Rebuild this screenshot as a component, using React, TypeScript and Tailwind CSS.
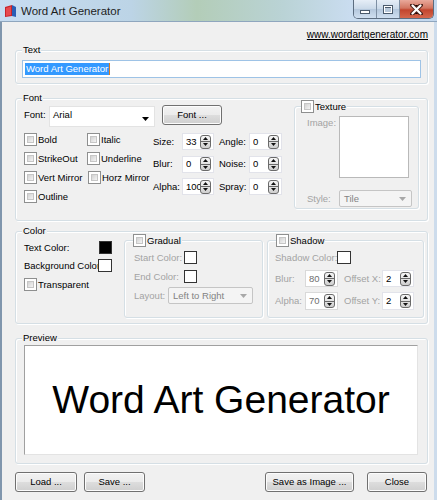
import React from 'react'

function Arrow({ color = '#000' }: { color?: string }) {
  return (
    <svg width="7" height="4" viewBox="0 0 7 4">
      <path d="M0 0H7L3.5 4Z" fill={color} />
    </svg>
  )
}

function CheckBox() {
  return (
    <div className="w-[13px] h-[13px] shrink-0 border border-[#8e8f8f] bg-white p-[2px]">
      <div className="w-full h-full bg-[linear-gradient(135deg,#d2d2d2,#f4f4f4)] border border-[#c6c6c6]" />
    </div>
  )
}

function Check({ label, className = '' }: { label: string; className?: string }) {
  return (
    <div className={`flex items-center gap-[1px] ${className}`}>
      <CheckBox />
      <span className="leading-[12px]">{label}</span>
    </div>
  )
}

function SpinBtn() {
  return (
    <div className="flex flex-col w-[11px] h-[14px] shrink-0 rounded-[3px] border border-[#6a6a6a] bg-[linear-gradient(#f6f6f6,#cfcfcf)] overflow-hidden">
      <div className="flex-1 flex items-center justify-center border-b border-[#6a6a6a]">
        <svg width="5" height="3" viewBox="0 0 5 3">
          <path d="M0 3L2.5 0L5 3Z" fill="#111" />
        </svg>
      </div>
      <div className="flex-1 flex items-center justify-center">
        <svg width="5" height="3" viewBox="0 0 5 3">
          <path d="M0 0H5L2.5 3Z" fill="#111" />
        </svg>
      </div>
    </div>
  )
}

function Spin({ value, className = '', dim = false }: { value: string; className?: string; dim?: boolean }) {
  return (
    <div
      className={`flex items-center h-[17px] bg-white border ${dim ? 'border-[#d9d9d9]' : 'border-[#e2e3ea]'} pl-[3px] pr-[2px] overflow-hidden ${className}`}
    >
      <span className={`flex-1 overflow-hidden whitespace-nowrap leading-[12px] ${dim ? 'text-[#6d6d6d]' : ''}`}>{value}</span>
      <SpinBtn />
    </div>
  )
}

function Swatch({ black = false, className = '' }: { black?: boolean; className?: string }) {
  return (
    <div
      className={`h-[13px] shrink-0 border border-[#333] ${black ? 'bg-black' : 'bg-white'} ${className}`}
    />
  )
}

function Group({
  label,
  legend,
  className = '',
  children,
}: {
  label?: string
  legend?: React.ReactNode
  className?: string
  children?: React.ReactNode
}) {
  return (
    <div
      className={`relative rounded-[3px] border border-[#d5dfe5] shadow-[inset_1px_1px_0_#fff,1px_1px_0_#fff] ${className}`}
    >
      {label && (
        <span className="absolute -top-[7px] left-[6px] bg-[#f0f0f0] px-[1px] leading-[12px]">{label}</span>
      )}
      {legend}
      {children}
    </div>
  )
}

function Button({ label, className = '' }: { label: string; className?: string }) {
  return (
    <button
      className={`h-[20px] rounded-[3px] border border-[#707070] bg-[linear-gradient(#f2f2f2_0%,#ebebeb_50%,#dddddd_51%,#cfcfcf_100%)] shadow-[inset_0_0_0_1px_#fcfcfc] text-[9.5px] leading-[12px] ${className}`}
    >
      {label}
    </button>
  )
}

function DisabledCombo({ value, className = '' }: { value: string; className?: string }) {
  return (
    <div
      className={`flex items-center justify-between h-[17px] rounded-[2px] border border-[#c5c5c5] bg-[#f4f4f4] pl-[4px] pr-[5px] ${className}`}
    >
      <span className="text-[#838383] leading-[12px]">{value}</span>
      <Arrow color="#a8a8a8" />
    </div>
  )
}

export default function App() {
  return (
    <div className="w-[437px] h-[500px] overflow-hidden flex flex-col bg-[#f0f0f0] text-black text-[9.5px] font-['Liberation_Sans',Arial,sans-serif]">
      {/* title bar */}
      <div className="h-[22px] shrink-0 flex items-start justify-between bg-[linear-gradient(90deg,#c7dcf1_0%,#bcd4e6_30%,#b3cdb8_45%,#bad3d6_65%,#c9dcef_80%,#c3d8ee_100%)] border-b border-[#8fa6be]">
        <div className="flex items-center h-[21px] pl-[4px] gap-[4px]">
          <svg width="13" height="14" viewBox="0 0 13 14">
            <path d="M1 3L8 1L8 12L1 13Z" fill="#c7242b" />
            <path d="M8 1L12 3L12 13L8 12Z" fill="#2a5db5" />
            <path d="M2 4L7 2.6L7 11L2 12Z" fill="#e7494e" />
          </svg>
          <span className="text-[11.5px] leading-[14px] text-[#1e1e1e]">Word Art Generator</span>
        </div>
        <div className="flex mr-[3px] h-[19px] border border-t-0 border-[#5c6d80] rounded-b-[5px] overflow-hidden">
          <div className="w-[23px] flex items-end justify-center pb-[4px] bg-[linear-gradient(#e6eef7,#c9d8e8_50%,#b4c7dc_51%,#cfdff0)] border-r border-[#7d8fa3]">
            <div className="w-[10px] h-[4px] bg-white border border-[#4a5a6c]" />
          </div>
          <div className="w-[23px] flex items-center justify-center bg-[linear-gradient(#e6eef7,#c9d8e8_50%,#b4c7dc_51%,#cfdff0)] border-r border-[#7d8fa3]">
            <div className="w-[10px] h-[9px] border border-[#4a5a6c] bg-white p-[1px]">
              <div className="w-full h-full bg-[#b7c8da] border-t border-[#4a5a6c]" />
            </div>
          </div>
          <div className="w-[33px] flex items-center justify-center bg-[linear-gradient(#e9a99b,#d27561_45%,#c2452e_55%,#d5674c)]">
            <svg width="13" height="11" viewBox="0 0 13 11">
              <path d="M2 1L6.5 4.5L11 1M2 10L6.5 6.5L11 10M2 1L11 10M11 1L2 10" stroke="#4c2018" strokeWidth="4" strokeLinecap="round" />
              <path d="M2.5 1.5L10.5 9.5M10.5 1.5L2.5 9.5" stroke="#fff" strokeWidth="2.2" strokeLinecap="round" />
            </svg>
          </div>
        </div>
      </div>

      {/* body */}
      <div className="flex-1 flex flex-col pl-[13px] pr-[6px] border-l-2 border-l-[#8096ad] border-r-[3px] border-r-[#cddcec]">
        <div className="mt-[7px] text-right text-[10px] leading-[12px] underline">www.wordartgenerator.com</div>

        {/* Text */}
        <Group label="Text" className="mt-[9px] h-[34px] shrink-0">
          <div className="mt-[9px] mx-[6px] h-[18px] bg-white border border-[#9ec3e6] flex items-center pl-[2px]">
            <span className="bg-[#3399ff] text-white leading-[12px] px-[1px]">Word Art Generator</span>
            <span className="w-[1px] h-[12px] bg-[#d87b24]" />
          </div>
        </Group>

        {/* Font */}
        <Group label="Font" className="mt-[14px] h-[123px] shrink-0 flex">
          <div className="flex flex-col pl-[8px] pt-[7px]">
            <div className="flex items-start h-[21px]">
              <span className="w-[25px] pt-[3px] leading-[12px]">Font:</span>
              <div className="w-[106px] h-[21px] bg-white border border-[#e3e3e3] flex items-start justify-between pl-[3px] pr-[5px] pt-[2px]">
                <span className="leading-[12px]">Arial</span>
                <div className="pt-[8px]">
                  <Arrow />
                </div>
              </div>
              <Button label="Font ..." className="ml-[7px] -mt-[1px] w-[60px] h-[17px]" />
            </div>
            <div className="flex items-start mt-[3px]">
              <div className="flex flex-col w-[63px]">
                <Check label="Bold" className="h-[19px]" />
                <Check label="StrikeOut" className="h-[19px]" />
                <Check label="Vert Mirror" className="h-[19px]" />
                <Check label="Outline" className="h-[19px]" />
              </div>
              <div className="flex flex-col w-[66px]">
                <Check label="Italic" className="h-[19px]" />
                <Check label="Underline" className="h-[19px]" />
                <Check label="Horz Mirror" className="h-[19px] ml-[1px]" />
              </div>
              <div className="flex flex-col gap-[5.5px] pt-[3px]">
                <div className="flex items-center">
                  <span className="w-[29px] leading-[12px]">Size:</span>
                  <Spin value="33" className="w-[32px]" />
                </div>
                <div className="flex items-center">
                  <span className="w-[29px] leading-[12px]">Blur:</span>
                  <Spin value="0" className="w-[32px]" />
                </div>
                <div className="flex items-center">
                  <span className="w-[29px] leading-[12px]">Alpha:</span>
                  <Spin value="100" className="w-[32px]" />
                </div>
              </div>
              <div className="flex flex-col gap-[5.5px] pt-[3px] ml-[5px]">
                <div className="flex items-center">
                  <span className="w-[30px] leading-[12px]">Angle:</span>
                  <Spin value="0" className="w-[33px]" />
                </div>
                <div className="flex items-center">
                  <span className="w-[30px] leading-[12px]">Noise:</span>
                  <Spin value="0" className="w-[33px]" />
                </div>
                <div className="flex items-center">
                  <span className="w-[30px] leading-[12px]">Spray:</span>
                  <Spin value="0" className="w-[33px]" />
                </div>
              </div>
            </div>
          </div>

          <Group
            className="ml-auto mr-[8px] mt-[7px] w-[125px] h-[103px] shrink-0"
            legend={
              <div className="absolute -top-[7px] left-[6px] flex items-center gap-[1px] bg-[#f0f0f0] pr-[1px]">
                <CheckBox />
                <span className="leading-[12px]">Texture</span>
              </div>
            }
          >
            <div className="flex items-start pl-[12px] pt-[9px]">
              <span className="w-[32px] pt-[1px] leading-[12px] text-[#a3a3a3]">Image:</span>
              <div className="w-[70px] h-[62px] bg-white border border-[#b9b9b9]" />
            </div>
            <div className="flex items-center pl-[12px] mt-[12px]">
              <span className="w-[32px] leading-[12px] text-[#a3a3a3]">Style:</span>
              <DisabledCombo value="Tile" className="w-[73px]" />
            </div>
          </Group>
        </Group>

        {/* Color */}
        <Group label="Color" className="mt-[10px] h-[93px] shrink-0 flex items-start">
          <div className="flex flex-col w-[88px] ml-[8px]">
            <div className="flex items-center justify-between h-[13px] mt-[9px]">
              <span className="leading-[12px]">Text Color:</span>
              <Swatch black className="w-[13px]" />
            </div>
            <div className="flex items-center h-[13px] mt-[5px]">
              <span className="w-[74px] whitespace-nowrap leading-[12px]">Background Color</span>
              <Swatch className="w-[14px] relative z-10" />
            </div>
            <Check label="Transparent" className="h-[13px] mt-[6px]" />
          </div>

          <Group
            className="ml-[12px] mt-[8px] w-[139px] h-[78px] shrink-0"
            legend={
              <div className="absolute -top-[7px] left-[8px] flex items-center gap-[1px] bg-[#f0f0f0] pr-[1px]">
                <CheckBox />
                <span className="leading-[12px]">Gradual</span>
              </div>
            }
          >
            <div className="flex flex-col pl-[9px] pt-[10px]">
              <div className="flex items-center h-[13px]">
                <span className="w-[50px] leading-[12px] text-[#a3a3a3]">Start Color:</span>
                <Swatch className="w-[13px]" />
              </div>
              <div className="flex items-center h-[13px] mt-[6px]">
                <span className="w-[50px] leading-[12px] text-[#a3a3a3]">End Color:</span>
                <Swatch className="w-[13px]" />
              </div>
              <div className="flex items-center mt-[4px]">
                <span className="w-[34px] leading-[12px] text-[#a3a3a3]">Layout:</span>
                <DisabledCombo value="Left to Right" className="w-[85px]" />
              </div>
            </div>
          </Group>

          <Group
            className="ml-[4px] mt-[8px] w-[157px] h-[78px] shrink-0"
            legend={
              <div className="absolute -top-[7px] left-[8px] flex items-center gap-[1px] bg-[#f0f0f0] pr-[1px]">
                <CheckBox />
                <span className="leading-[12px]">Shadow</span>
              </div>
            }
          >
            <div className="flex flex-col pl-[7px] pt-[10px]">
              <div className="flex items-center h-[13px]">
                <span className="w-[62px] leading-[12px] text-[#a3a3a3] whitespace-nowrap">Shadow Color:</span>
                <Swatch className="w-[14px] relative z-10" />
              </div>
              <div className="flex items-center mt-[6px]">
                <span className="w-[30px] leading-[12px] text-[#a3a3a3]">Blur:</span>
                <Spin value="80" dim className="w-[33px]" />
                <span className="w-[38px] ml-[6px] leading-[12px] text-[#a3a3a3]">Offset X:</span>
                <Spin value="2" className="w-[32px]" />
              </div>
              <div className="flex items-center mt-[5px]">
                <span className="w-[30px] leading-[12px] text-[#a3a3a3]">Alpha:</span>
                <Spin value="70" dim className="w-[33px] h-[18px]" />
                <span className="w-[38px] ml-[6px] leading-[12px] text-[#a3a3a3]">Offset Y:</span>
                <Spin value="2" className="w-[32px] h-[18px]" />
              </div>
            </div>
          </Group>
        </Group>

        {/* Preview */}
        <Group label="Preview" className="mt-[14px] h-[126px] shrink-0 flex">
          <div className="flex-1 ml-[8px] mr-[9px] mt-[6px] h-[110px] bg-white border-t border-l border-t-[#a0a0a0] border-l-[#a0a0a0] border-r border-b border-r-[#e3e3e3] border-b-[#e3e3e3] flex items-center justify-center">
            <span className="text-[39px] leading-[44px]">Word Art Generator</span>
          </div>
        </Group>

        {/* buttons */}
        <div className="mt-[8px] flex items-start mr-[1px]">
          <Button label="Load ..." className="w-[62px]" />
          <Button label="Save ..." className="ml-[7px] w-[61px]" />
          <Button label="Save as Image ..." className="ml-auto w-[89px]" />
          <Button label="Close" className="ml-[13px] w-[60px]" />
        </div>
      </div>
    </div>
  )
}
